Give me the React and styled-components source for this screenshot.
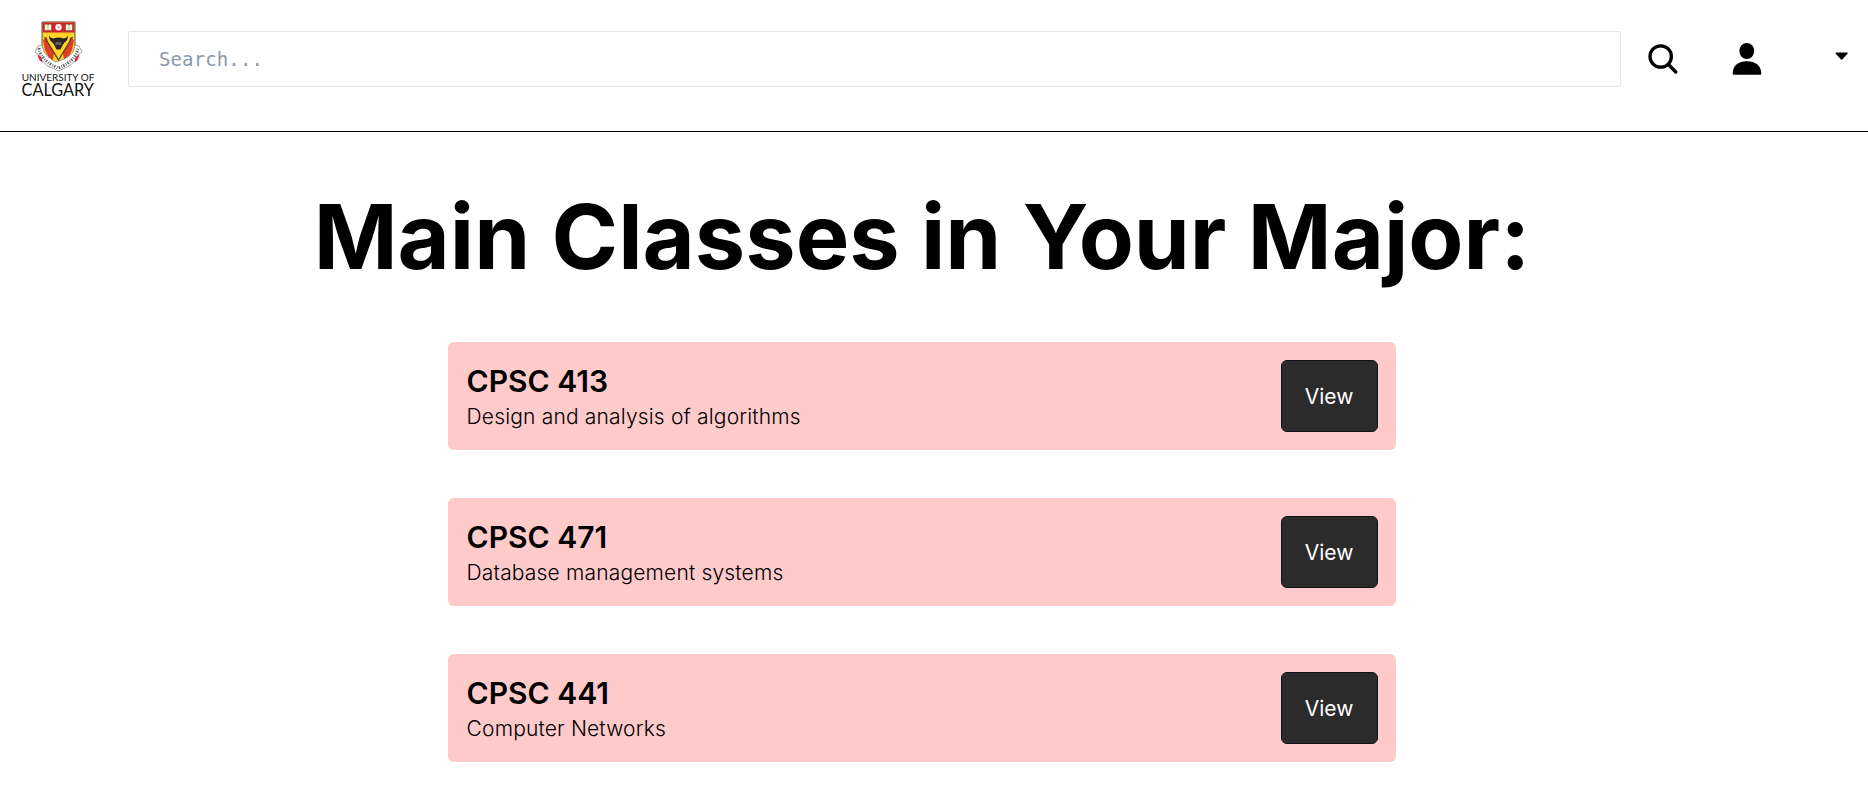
import React from "react";
import styled, { createGlobalStyle } from "styled-components";

const GlobalStyle = createGlobalStyle`
  *, *::before, *::after { box-sizing: border-box; }
  body { margin: 0; background: #fff; color: #000; font-family: Inter, "Liberation Sans", sans-serif; }
  h1, h2, p { margin: 0; }
  svg { display: block; }
`;

const Header = styled.header`
  display: flex;
  align-items: flex-start;
  height: 132px;
  padding: 0 20px;
  border-bottom: 1px solid #000;
`;

const LogoLink = styled.a`
  flex: none;
  width: 76px;
  margin: 20px 32px 0 0;
`;

const SearchInput = styled.input`
  flex: none;
  width: 1493px;
  height: 56px;
  margin-top: 31px;
  padding: 0 30px;
  border: 1px solid #e5e7eb;
  border-radius: 2px;
  background: #fff;
  outline: none;
  font: 19px "DejaVu Sans Mono", monospace;
  letter-spacing: 0.12px;
  &::placeholder { color: #8b98ab; opacity: 1; }
`;

const IconButton = styled.button`
  display: flex;
  flex: none;
  margin: ${(p) => p.$top}px 0 0 ${(p) => p.$gap}px;
  padding: 0;
  border: 0;
  background: none;
  color: #000;
`;

const Main = styled.main`
  display: flex;
  flex-direction: column;
  align-items: center;
  width: 1844px;
`;

const Title = styled.h1`
  margin-top: 50px;
  font-size: 90px;
  font-weight: 700;
  line-height: 109px;
  white-space: nowrap;
`;

const CourseList = styled.section`
  display: flex;
  flex-direction: column;
  gap: 48px;
  width: 948px;
  margin-top: 51px;
`;

const CourseCard = styled.article`
  display: flex;
  align-items: center;
  justify-content: space-between;
  height: 108px;
  padding: 18px 18px 18px 18.6px;
  border-radius: 6px;
  background: #fecaca;
`;

const CourseName = styled.h2`
  font-size: 30px;
  font-weight: 600;
  line-height: 42px;
`;

const CourseText = styled.p`
  font-size: 21px;
  font-weight: 300;
  line-height: 30px;
  letter-spacing: 0.17px;
`;

const ViewButton = styled.button`
  width: 97px;
  height: 72px;
  padding: 0 1px 0 0;
  border: 1px solid #0c1118;
  border-radius: 6px;
  background: #2b2b2b;
  color: #fff;
  font: 400 21px Inter, sans-serif;
`;

function UniversityLogo() {
  return (
    <svg width="76" height="84" viewBox="0 0 76 84">
      <path d="M22 2H55V25C55 38 49 45 38.500 50C28 45 22 38 22 25Z" fill="#ffd52a" stroke="#5c5136" />
      <path d="M22.500 2.500H54.500V12.500H22.500Z" fill="#d3202a" />
      <path d="M24.500 4.500q2-1 3.500 .5q1.500-1.500 3.500-.5v6h-7zM45.500 4.500q2-1 3.500 .5q1.500-1.500 3.500-.5v6h-7z" fill="#fff8d8" stroke="#665246" strokeWidth=".6" />
      <path d="M28 5v5M49 5v5" stroke="#a39467" strokeWidth=".7" />
      <circle cx="38.500" cy="7.300" r="3.200" fill="#fff" />
      <circle cx="38.500" cy="7.300" r="1" fill="#d08490" />
      <path d="M23 20l4-3l1 6l6 10l-1 7l-4-2l-4-8zM54 20l-4-3l-1 6l-6 10l1 7l4-2l4-8z" fill="#e23a28" />
      <path d="M24.500 17L38.500 40L52.500 17" fill="none" stroke="#4f4418" strokeWidth="1.300" />
      <path d="M29.500 15q0 3 4 3.500q5-2 10 0q4-.5 4-3.500q1.500 5-3 7.500l-2 3l-2 4h-4l-2-4l-2-3q-4.500-2.500-3-7.500z" fill="#2a2520" />
      <path d="M35.500 22h6v3h-6z" fill="#625c56" />
      <path d="M18 26l-3 6l4 3q4 9 11 12l8.500 4l8.500-4q7-3 11-12l4-3l-3-6l-4-1l-2 7q-5 7-17.500 10Q29 39 24 32l-2-7z" fill="#fff" stroke="#888" strokeWidth=".8" />
      <path d="M19 28q2 13 19.500 20Q56 41 58 28" fill="none" stroke="#626262" strokeWidth="3" strokeDasharray="1.500 1.400 .8 1.200" />
      <path d="M17.500 34.500q1 6 5 8l-1-5zM59.500 34.500q-1 6-5 8l1-5z" fill="#d92836" />
      <text x="1.800" y="60.800" textLength="72.500" lengthAdjust="spacingAndGlyphs" fontFamily="Lato, sans-serif" fontSize="8.800" fill="#111">UNIVERSITY OF</text>
      <text x="1.500" y="76" textLength="72.500" lengthAdjust="spacingAndGlyphs" fontFamily="Lato, sans-serif" fontSize="17" fill="#111">CALGARY</text>
    </svg>
  );
}

const courses = [
  ["CPSC 413", "Design and analysis of algorithms"],
  ["CPSC 471", "Database management systems"],
  ["CPSC 441", "Computer Networks"],
];

export default function App() {
  return (
    <>
      <GlobalStyle />
      <Header>
        <LogoLink aria-label="University of Calgary"><UniversityLogo /></LogoLink>
        <SearchInput placeholder="Search..." />
        <IconButton aria-label="Search" $top={43} $gap={26}>
          <svg width="32" height="32" fill="none" stroke="currentColor" strokeWidth="3.300" strokeLinecap="round">
            <circle cx="13.700" cy="13.500" r="10.700" />
            <path d="M21.500 21.500L28.800 29" />
          </svg>
        </IconButton>
        <IconButton aria-label="Account" $top={43} $gap={53}>
          <svg width="30" height="32" fill="currentColor">
            <ellipse cx="14.800" cy="8" rx="7.400" ry="8" />
            <path d="M.7 30.500C.7 23 6 18.300 14.800 18.300S29.300 23 29.300 30.500Q29.300 31.800 28 31.800H2Q.7 31.800 .7 30.500Z" />
          </svg>
        </IconButton>
        <IconButton aria-label="Open menu" $top={52} $gap={73}>
          <svg width="14" height="9" fill="currentColor">
            <path d="M1 .5H12.200Q13.300 .8 12.500 1.700L7.500 7.300Q6.700 8 5.900 7.300L.7 1.700Q0 .8 1 .5Z" />
          </svg>
        </IconButton>
      </Header>
      <Main>
        <Title>Main Classes in Your Major:</Title>
        <CourseList>
          {courses.map(([name, text]) => (
            <CourseCard key={name}>
              <div>
                <CourseName>{name}</CourseName>
                <CourseText>{text}</CourseText>
              </div>
              <ViewButton>View</ViewButton>
            </CourseCard>
          ))}
        </CourseList>
      </Main>
    </>
  );
}
